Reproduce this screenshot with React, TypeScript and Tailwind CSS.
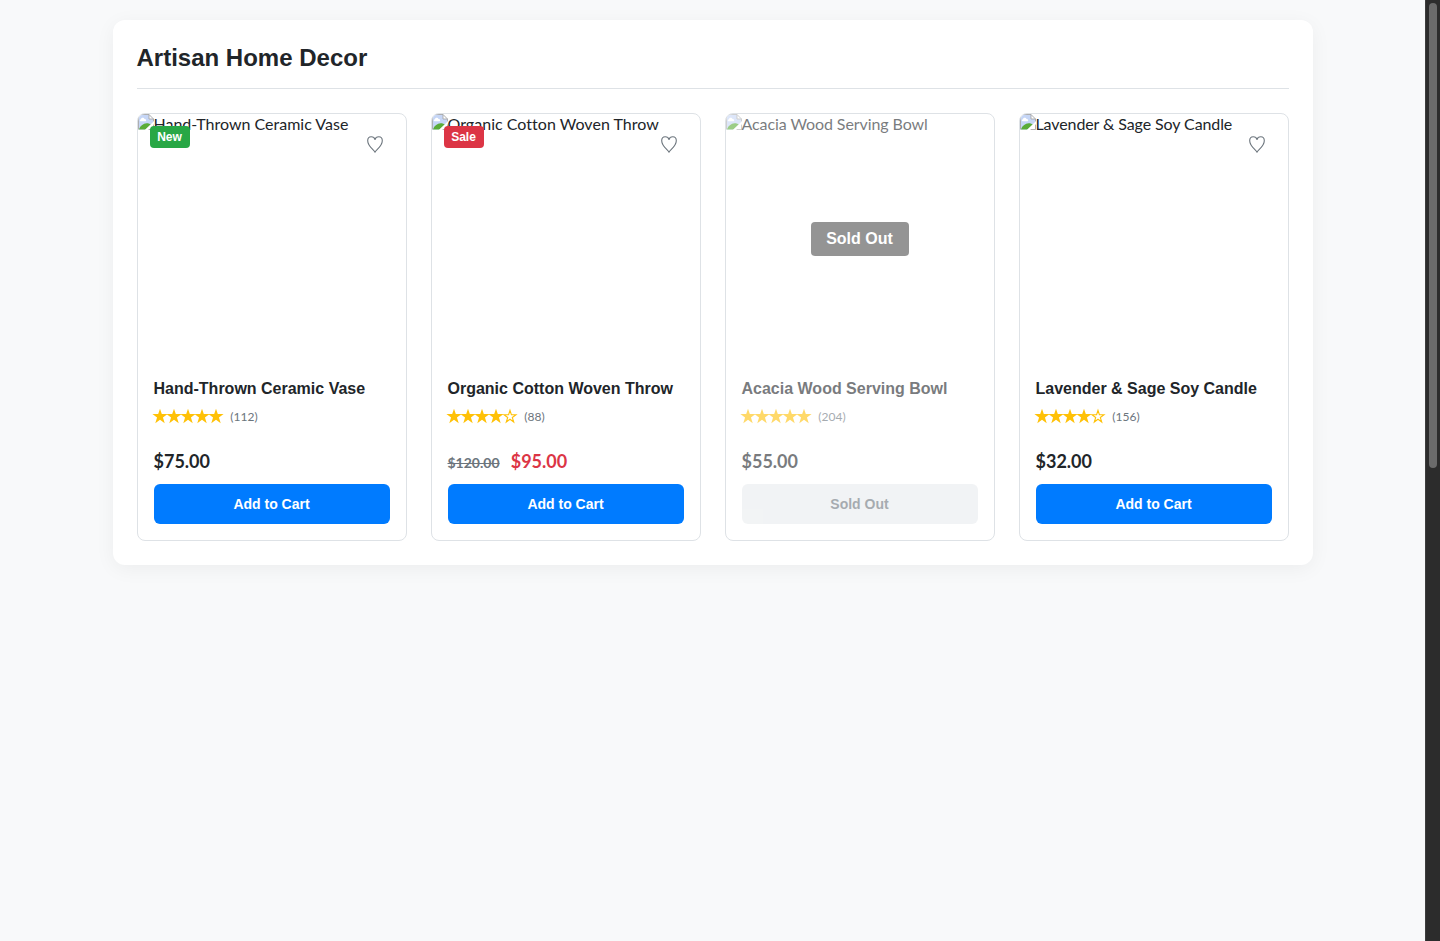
type Product = {
  name: string;
  rating: number;
  reviews: number;
  price: string;
  oldPrice?: string;
  badge?: 'New' | 'Sale';
  soldOut?: boolean;
  altClass: string;
};

const products: Product[] = [
  { name: 'Hand-Thrown Ceramic Vase', rating: 5, reviews: 112, price: '$75.00', badge: 'New', altClass: 'tracking-normal' },
  { name: 'Organic Cotton Woven Throw', rating: 4, reviews: 88, price: '$95.00', oldPrice: '$120.00', badge: 'Sale', altClass: 'tracking-[0.03px]' },
  { name: 'Acacia Wood Serving Bowl', rating: 5, reviews: 204, price: '$55.00', soldOut: true, altClass: 'tracking-[-0.085px]' },
  { name: 'Lavender & Sage Soy Candle', rating: 4, reviews: 156, price: '$32.00', altClass: 'tracking-[-0.1px]' },
];

function MissingImageIcon() {
  return (
    <svg width="16" height="16" viewBox="0 0 16 16" className="block shrink-0">
      <path d="M0.5 0.5H11L15.5 5V8L7.5 15.5H0.5Z" fill="#c6d6f6" />
      <path d="M2.5 7.3C1.5 7.3 1.5 5.4 2.8 5.2C3 3.3 6 3.1 6.5 4.9C8.4 4.7 8.8 7.3 7 7.3Z" fill="#fff" />
      <path d="M1 15.5C2 12 5.2 9.4 8.7 9.2C10.5 9.2 12 9.8 12.9 10.5L7.8 15.5Z" fill="#5aac38" />
      <path d="M11 0.5V5H15.5Z" fill="#fff" />
      <path d="M0.5 15.5V0.5H11L15.5 5V7.5M11 0.5V5H15.5" fill="none" stroke="#a8a8a8" strokeWidth="0.9" />
      <path d="M16 7.2V9.6L9.6 16H6.8Z" fill="#fff" />
      <path d="M15.5 10.6V15.5H10.6" fill="none" stroke="#a8a8a8" strokeWidth="0.9" />
    </svg>
  );
}

function Heart() {
  return (
    <svg width="16" height="17" viewBox="0 0 16 17" fill="none" stroke="#6c757d" strokeWidth="1.1" strokeLinejoin="round">
      <path d="M8 16.2C6.5 13.6 0.7 10 0.7 4.7C0.7 2.2 2.2 0.7 4.2 0.7C6.1 0.7 7.5 1.6 8 3.5C8.5 1.6 9.9 0.7 11.8 0.7C13.8 0.7 15.3 2.2 15.3 4.7C15.3 10 9.5 13.6 8 16.2Z" />
    </svg>
  );
}

function Star({ filled }: { filled: boolean }) {
  return (
    <svg width="14" height="15" viewBox="0 0 14 15" className="block overflow-visible">
      {filled ? (
        <path d="M7 -0.3L8.8 5.1H14.6L9.95 8.6L11.7 14.2L7 10.8L2.3 14.2L4.05 8.6L-0.6 5.1H5.2Z" fill="#ffc107" />
      ) : (
        <path d="M7 1.4L8.4 5.7H13L9.3 8.5L10.7 13L7 10.2L3.3 13L4.7 8.5L1 5.7H5.6Z" fill="none" stroke="#ffc107" strokeWidth="1.1" />
      )}
    </svg>
  );
}

function ProductCard({ p }: { p: Product }) {
  return (
    <article className="relative flex h-[428px] flex-col overflow-hidden rounded-lg border border-[#dee2e6] bg-white">
      <div className={p.soldOut ? 'h-[250px] opacity-60' : 'h-[250px]'}>
        <div className="flex items-start">
          <MissingImageIcon />
          <span className={`text-base leading-5 whitespace-nowrap ${p.altClass}`}>{p.name}</span>
        </div>
      </div>
      {p.badge && (
        <span
          className={`absolute top-3 left-3 flex h-[22px] w-10 items-center justify-center rounded-[4px] font-['Liberation_Sans'] text-xs font-bold text-white ${p.badge === 'New' ? 'bg-[#28a745]' : 'bg-[#dc3545]'}`}
        >
          {p.badge}
        </span>
      )}
      {!p.soldOut && (
        <button aria-label="Add to wishlist" className="absolute top-[21.5px] right-[22.4px]">
          <Heart />
        </button>
      )}
      {p.soldOut && (
        <span className="absolute top-[108px] left-[85px] flex h-[34px] w-[98px] items-center justify-center rounded-[4px] bg-[#949494] font-['Liberation_Sans'] text-base font-bold text-white">
          Sold Out
        </span>
      )}
      <div className={`flex flex-1 flex-col px-4 pb-4 ${p.soldOut ? 'opacity-60' : ''}`}>
        <h2 className="mt-[15px] h-5 font-['Liberation_Sans'] text-base leading-5 font-bold whitespace-nowrap">
          {p.name}
        </h2>
        <div className="mt-[7px] flex h-5 items-center text-[#6c757d]">
          <div className="-ml-[0.4px] flex">
            {[1, 2, 3, 4, 5].map((n) => (
              <Star key={n} filled={n <= p.rating} />
            ))}
          </div>
          <span className="ml-[7.2px] pt-0.5 text-xs leading-5">({p.reviews})</span>
        </div>
        <div className="mt-auto flex h-7 items-baseline text-lg leading-7 font-bold">
          {p.oldPrice && <span className="mr-[11.2px] text-sm leading-7 text-[#6c757d] line-through">{p.oldPrice}</span>}
          <span className={p.oldPrice ? 'text-[#dc3545]' : ''}>{p.price}</span>
        </div>
        <button
          disabled={p.soldOut}
          className={`mt-[9px] h-10 rounded-md font-['Liberation_Sans'] text-sm font-bold ${p.soldOut ? 'bg-[#e9ecef] text-[#6c757d]' : 'bg-[#007bff] text-white'}`}
        >
          {p.soldOut ? 'Sold Out' : 'Add to Cart'}
        </button>
      </div>
    </article>
  );
}

export default function App() {
  return (
    <div className="flex h-[941px] overflow-hidden bg-[#f8f9fa] font-[Lato,sans-serif] text-[#212529]">
      <main className="flex flex-1 items-start justify-center pt-5">
        <section className="h-[545px] w-[1200px] rounded-xl bg-white p-6 shadow-[0_4px_20px_rgba(0,0,0,0.05)]">
          <h1 className="h-[45px] border-b border-[#dee2e6] font-['Liberation_Sans'] text-2xl leading-7 font-bold">
            Artisan Home Decor
          </h1>
          <div className="mt-6 grid grid-cols-4 gap-6">
            {products.map((p) => (
              <ProductCard key={p.name} p={p} />
            ))}
          </div>
        </section>
      </main>
      <div className="w-[15px] border-l border-[#3d3d3d] bg-[#2c2c2c] pt-[3px] pl-[3px]">
        <div className="h-[465px] w-2 rounded-full bg-[#6b6b6b]" />
      </div>
    </div>
  );
}
